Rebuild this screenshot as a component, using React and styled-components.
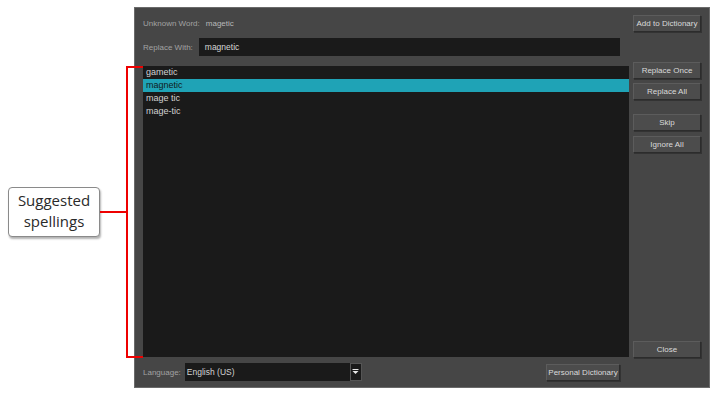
import styled, { createGlobalStyle } from "styled-components";

const GlobalStyle = createGlobalStyle`
  html, body {
    margin: 0;
    padding: 0;
    background: #ffffff;
  }
  * {
    box-sizing: border-box;
  }
`;

const suggestions = ["gametic", "magnetic", "mage tic", "mage-tic"];

function Arrow() {
  return (
    <svg width="7" height="6" viewBox="0 0 7 6">
      <rect x="0.5" y="0" width="6" height="1" fill="#e8e8e8" />
      <path d="M0.5 2 L6.5 2 L3.5 5 Z" fill="#e8e8e8" />
    </svg>
  );
}

function App() {
  return (
    <Page>
      <GlobalStyle />
      <Annotation>
        <Callout>
          Suggested
          <br />
          spellings
        </Callout>
        <Connector />
        <Bracket />
      </Annotation>

      <Dialog>
        <LabelRow>
          <Label>Unknown Word:</Label>
          <Value>magetic</Value>
        </LabelRow>
        <Button>Add to Dictionary</Button>

        <LabelRow $inset={9}>
          <Label>Replace With:</Label>
          <Input>magnetic</Input>
        </LabelRow>
        <div />

        <List>
          {suggestions.map((word, i) => (
            <Item key={word} $selected={i === 1}>
              {word}
            </Item>
          ))}
        </List>
        <Side>
          <Button>Replace Once</Button>
          <Button $top={4}>Replace All</Button>
          <Button $top={14}>Skip</Button>
          <Button $top={5}>Ignore All</Button>
          <Spacer />
          <Button $bottom={-1}>Close</Button>
        </Side>

        <BottomRow>
          <Label>Language:</Label>
          <Select>
            <SelectValue>English (US)</SelectValue>
            <SelectArrow>
              <Arrow />
            </SelectArrow>
          </Select>
          <Spacer />
          <Button $width={74}>Personal Dictionary</Button>
        </BottomRow>
        <div />
      </Dialog>
    </Page>
  );
}

const Page = styled.div`
  display: flex;
  align-items: flex-start;
  padding: 7px 0 0 8px;
  width: 717px;
  height: 396px;
`;

const Annotation = styled.div`
  display: flex;
  align-items: center;
  height: 292px;
  margin-top: 59px;
  margin-right: -9px;
  position: relative;
  z-index: 2;
`;

const Callout = styled.div`
  width: 92px;
  height: 50px;
  border: 1px solid #8a8a8a;
  border-radius: 4px;
  background: #ffffff;
  box-shadow: 1px 2px 2px rgba(0, 0, 0, 0.3);
  font-family: "Open Sans", "Noto Sans", sans-serif;
  font-size: 15px;
  line-height: 21px;
  color: #2a2a2a;
  text-align: center;
  padding-top: 2px;
`;

const Connector = styled.div`
  width: 26px;
  height: 2px;
  background: #ee0000;
`;

const Bracket = styled.div`
  width: 17px;
  height: 292px;
  border: 2px solid #ee0000;
  border-right: none;
`;

const Dialog = styled.div`
  width: 576px;
  height: 381px;
  background: #464646;
  border: 1px solid #6a6a6a;
  display: grid;
  grid-template-columns: 486px 68px;
  grid-template-rows: 17px 18px 295px 18px;
  column-gap: 4px;
  row-gap: 6px;
  padding: 7px 8px 0 8px;
  font-family: "Liberation Sans", Arial, sans-serif;
  font-size: 8px;
`;

const LabelRow = styled.div`
  display: flex;
  align-items: center;
  gap: 6px;
  padding-right: ${(p) => p.$inset || 0}px;
`;

const Label = styled.span`
  color: #a2a2a2;
  white-space: nowrap;
`;

const Value = styled.span`
  color: #b8b8b8;
`;

const Input = styled.div`
  flex: 1;
  height: 18px;
  background: #1a1a1a;
  color: #d6d6d6;
  display: flex;
  align-items: center;
  padding-left: 6px;
  font-size: 8.5px;
`;

const List = styled.div`
  margin-top: 4px;
  background: #1a1a1a;
  font-size: 9px;
  display: flex;
  flex-direction: column;
`;

const Item = styled.div`
  height: 13px;
  line-height: 13px;
  padding-left: 3px;
  color: ${(p) => (p.$selected ? "#0f1a1c" : "#d2d2d2")};
  background: ${(p) => (p.$selected ? "#1fa3b6" : "transparent")};
`;

const Side = styled.div`
  display: flex;
  flex-direction: column;
`;

const Spacer = styled.div`
  flex: 1;
`;

const Button = styled.div`
  width: ${(p) => p.$width || 68}px;
  height: 17px;
  margin-top: ${(p) => p.$top || 0}px;
  margin-bottom: ${(p) => p.$bottom || 0}px;
  background: #4c4c4c;
  border: 1px solid #5c5c5c;
  border-right-color: #2c2c2c;
  border-bottom-color: #2c2c2c;
  box-shadow: 1px 1px 0 #333333;
  color: #dadada;
  font-size: 8px;
  display: flex;
  align-items: center;
  justify-content: center;
  white-space: nowrap;
`;

const BottomRow = styled.div`
  display: flex;
  align-items: center;
  padding-right: 9px;
`;

const Select = styled.div`
  display: flex;
  width: 177px;
  height: 18px;
  margin-left: 4px;
  background: #1a1a1a;
`;

const SelectValue = styled.div`
  flex: 1;
  display: flex;
  align-items: center;
  padding-left: 2px;
  color: #d2d2d2;
  font-size: 8.5px;
`;

const SelectArrow = styled.div`
  width: 12px;
  border: 1px solid #555555;
  display: flex;
  align-items: center;
  justify-content: center;
`;

export default App;
